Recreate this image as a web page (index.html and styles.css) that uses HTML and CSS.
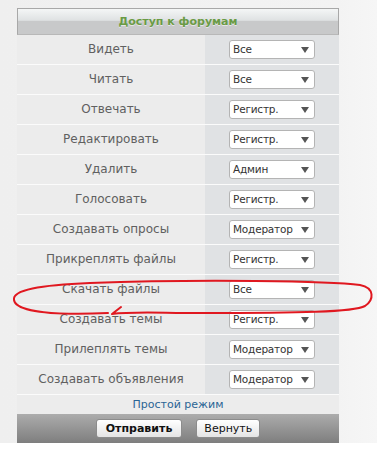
FILE: index.html
```html
<!DOCTYPE html>
<html lang="ru">
<head>
    <meta charset="UTF-8">
    <title>Доступ к форумам</title>
    <link rel="stylesheet" href="styles.css">
</head>
<body>
    <div class="page">
        <div class="panel">
            <div class="head">Доступ к форумам</div>
            <div class="row"><div class="label">Видеть</div><div class="cell"><span class="sel">Все</span></div></div>
            <div class="row"><div class="label">Читать</div><div class="cell"><span class="sel">Все</span></div></div>
            <div class="row"><div class="label">Отвечать</div><div class="cell"><span class="sel">Регистр.</span></div></div>
            <div class="row"><div class="label">Редактировать</div><div class="cell"><span class="sel">Регистр.</span></div></div>
            <div class="row"><div class="label">Удалить</div><div class="cell"><span class="sel">Админ</span></div></div>
            <div class="row"><div class="label">Голосовать</div><div class="cell"><span class="sel">Регистр.</span></div></div>
            <div class="row"><div class="label">Создавать опросы</div><div class="cell"><span class="sel">Модератор</span></div></div>
            <div class="row"><div class="label">Прикреплять файлы</div><div class="cell"><span class="sel">Регистр.</span></div></div>
            <div class="row"><div class="label">Скачать файлы</div><div class="cell"><span class="sel">Все</span></div></div>
            <div class="row"><div class="label">Создавать темы</div><div class="cell"><span class="sel">Регистр.</span></div></div>
            <div class="row"><div class="label">Прилеплять темы</div><div class="cell"><span class="sel">Модератор</span></div></div>
            <div class="row"><div class="label">Создавать объявления</div><div class="cell"><span class="sel">Модератор</span></div></div>
            <div class="mode"><a href="#">Простой режим</a></div>
            <div class="bar">
                <button class="btn bold">Отправить</button>
                <button class="btn">Вернуть</button>
            </div>
        </div>
        <svg class="scribble" width="377" height="464" viewBox="0 0 377 464">
            <path d="M108,313 C60,315 16,313 14,300 C12,290 40,285 90,283 C200,279 330,281 360,285 C375,288 374,300 365,306 C354,312 300,313 200,313 C160,313 132,311 112,314 L121,307" fill="none" stroke="#e01820" stroke-width="2" stroke-linecap="round" stroke-linejoin="round"/>
        </svg>
    </div>
</body>
</html>
```

FILE: styles.css
```css
body {
    margin: 0;
    background: #fff;
    font-family: "DejaVu Sans", Verdana, sans-serif;
}
.page {
    position: relative;
    padding: 8px 0 0 17px;
    background: linear-gradient(to right, #efefef 0, #f3f3f3 339px, #f6f6f6 100%);
}
.panel {
    width: 322px;
}
.head {
    height: 25px;
    line-height: 25px;
    border: 1px solid #a8a8a8;
    border-bottom-color: #b8b8b8;
    background: linear-gradient(#f4f6f6 0, #dfe2e3 45%, #c8c9ca 50%, #c8c9ca 100%);
    text-align: center;
    font-size: 11px;
    font-weight: bold;
    color: #6a9b45;
    text-shadow: 0 1px 0 #e6e6e6;
}
.row {
    display: flex;
    height: 29px;
    border-bottom: 1px solid #fbfbfb;
}
.label {
    width: 188px;
    background: #ececec;
    text-align: center;
    line-height: 29px;
    font-size: 12px;
    color: #606060;
}
.cell {
    flex: 1;
    background: #e0e2e4;
    display: flex;
    align-items: center;
    justify-content: center;
}
.sel {
    position: relative;
    box-sizing: border-box;
    width: 86px;
    height: 19px;
    padding-left: 3px;
    background: #fff;
    border: 1px solid #b4b4b4;
    border-radius: 3px;
    font-size: 10.5px;
    letter-spacing: -0.2px;
    line-height: 17px;
    color: #333;
}
.sel::after {
    content: "";
    position: absolute;
    right: 5px;
    top: 6px;
    border-left: 4px solid transparent;
    border-right: 4px solid transparent;
    border-top: 6px solid #555;
}
.mode {
    height: 19px;
    line-height: 19px;
    background: #ececec;
    text-align: center;
    font-size: 11px;
}
.mode a {
    color: #2a6495;
    text-decoration: none;
}
.bar {
    height: 29px;
    display: flex;
    align-items: center;
    justify-content: center;
    gap: 14px;
    background: linear-gradient(#acacac, #7e7e7e);
}
.btn {
    height: 19px;
    padding: 0 7px;
    border: 1px solid #8c8c8c;
    border-radius: 3px;
    background: linear-gradient(#ffffff, #e4e4e4);
    font-family: "DejaVu Sans", Verdana, sans-serif;
    font-size: 11px;
    color: #111;
}
.bold {
    font-weight: bold;
    padding: 0 9px;
}
.scribble {
    position: absolute;
    left: 0;
    top: 0;
    pointer-events: none;
}
```
